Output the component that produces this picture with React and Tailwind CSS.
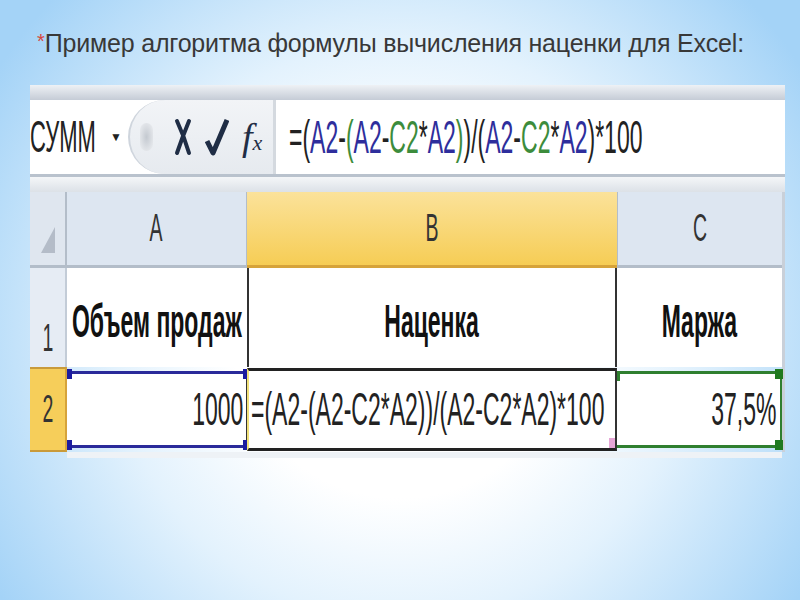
import React from 'react';

const sans = { fontFamily: '"Liberation Sans", Arial, sans-serif' };

// formula pieces with Excel's reference colours
const formula = [
  ['=(', 'text-[#222]'],
  ['A2', 'text-[#2e2e9c]'],
  ['-', 'text-[#222]'],
  ['(', 'text-[#3c8c3c]'],
  ['A2', 'text-[#2e2e9c]'],
  ['-', 'text-[#222]'],
  ['C2', 'text-[#3c8c3c]'],
  ['*', 'text-[#222]'],
  ['A2', 'text-[#2e2e9c]'],
  [')', 'text-[#3c8c3c]'],
  [')/(', 'text-[#222]'],
  ['A2', 'text-[#2e2e9c]'],
  ['-', 'text-[#222]'],
  ['C2', 'text-[#3c8c3c]'],
  ['*', 'text-[#222]'],
  ['A2', 'text-[#2e2e9c]'],
  [')*100', 'text-[#222]'],
];

// the screenshot is squeezed horizontally, so text is drawn narrow
const Narrow = ({ children, origin = 'origin-center', className = '' }) => (
  <span className={`inline-block shrink-0 whitespace-nowrap scale-x-[0.5] ${origin} ${className}`}>
    {children}
  </span>
);

const Handle = ({ className }) => (
  <span className={`absolute ${className}`}></span>
);

export default function App() {
  return (
    <div
      className="w-[800px] h-[600px] overflow-hidden bg-[radial-gradient(ellipse_60%_80%_at_50%_55%,#ffffff_35%,#e3f2fd_60%,#a4d3f7_100%)]"
      style={sans}
    >
      {/* Title */}
      <div className="pt-[31px] pl-[37px] flex items-start">
        <span className="text-[#d9463c] text-[20px] leading-none">*</span>
        <span className="text-[#383838] text-[25px] leading-none tracking-[-0.2px]">
          Пример алгоритма формулы вычисления наценки для Excel:
        </span>
      </div>

      {/* Excel screenshot */}
      <div className="ml-[30px] mt-[29px] w-[755px] flex flex-col">
        <div className="h-[15px] bg-[linear-gradient(#eef1f5,#c5ccd6)]"></div>

        {/* Formula bar */}
        <div className="h-[77px] flex bg-white border-b-[3px] border-[#b9c2cd]">
          <div className="w-[98px] relative flex items-center">
            <Narrow origin="origin-left" className="text-[44px] text-[#222]">СУММ</Narrow>
            <span className="absolute left-[80px] top-[28px] text-[12px] text-[#222]">▼</span>
          </div>
          <div className="w-[145px] flex items-center pl-[10px] bg-[linear-gradient(#f2f4f7,#e6eaef)] rounded-l-[40px] border-l-2 border-[#cfd5dd]">
            <span className="w-[13px] h-[28px] rounded-full bg-[radial-gradient(#c4c9d0,#eef0f3)]"></span>
            <svg width="18" height="38" viewBox="0 0 18 38" className="ml-[21px]">
              <path d="M3 3 Q10 18 15 35 M15 3 Q8 20 3 35" stroke="#1f2d45" strokeWidth="4" fill="none" strokeLinecap="round" />
            </svg>
            <svg width="24" height="40" viewBox="0 0 24 40" className="ml-[13px]">
              <path d="M2 24 L8 36 L22 3" stroke="#1f2d45" strokeWidth="5" fill="none" strokeLinejoin="round" />
            </svg>
            <span className="ml-[13px] text-[38px] italic text-[#1f2d45] leading-none" style={{ fontFamily: '"Liberation Serif", serif' }}>
              f<span className="text-[22px]">x</span>
            </span>
          </div>
          <div className="w-[3px] bg-[#d4d9df]"></div>
          <div className="flex-1 flex items-center pl-[13px] overflow-hidden">
            <Narrow origin="origin-left" className="text-[46px]">
              {formula.map(([t, c], i) => (
                <span key={i} className={c}>{t}</span>
              ))}
            </Narrow>
          </div>
        </div>

        <div className="h-[15px] bg-[linear-gradient(#f4f6f8,#dce1e7)]"></div>

        {/* Grid */}
        <div className="grid grid-cols-[37px_180px_370px_165px_3px] grid-rows-[76px_99px_85px]">
          {/* header row */}
          <div className="bg-[#dfe6ef] border-b-[3px] border-r-[2px] border-[#b3bdc9] flex items-end justify-center pb-[10px]">
            <svg width="18" height="30" viewBox="0 0 18 30"><polygon points="16,2 16,28 2,28" fill="#b4bcc8" /></svg>
          </div>
          <div className="bg-[#dde6f1] border-b-[3px] border-r border-[#b3bdc9] flex items-center justify-center overflow-hidden text-[39px] text-[#333]">
            <Narrow>A</Narrow>
          </div>
          <div className="bg-[linear-gradient(#fbe29a,#f6cd55)] border-b-[3px] border-[#d6a33a] flex items-center justify-center overflow-hidden text-[39px] text-[#333]">
            <Narrow>B</Narrow>
          </div>
          <div className="bg-[#dde6f1] border-b-[3px] border-l border-[#b3bdc9] flex items-center justify-center overflow-hidden text-[39px] text-[#333]">
            <Narrow>C</Narrow>
          </div>
          <div className="bg-[#c9d0d9]"></div>

          {/* row 1 */}
          <div className="bg-[#e6ecf4] border-r-[2px] border-[#c3ccd7] flex items-end justify-center overflow-hidden text-[39px] text-[#333]">
            <Narrow>1</Narrow>
          </div>
          <div className="bg-white flex items-center justify-center overflow-hidden text-[46px] font-bold text-[#111] pt-[8px]">
            <Narrow>Объем продаж</Narrow>
          </div>
          <div className="bg-white border-l-2 border-r-2 border-[#333] flex items-center justify-center overflow-hidden text-[46px] font-bold text-[#111] pt-[8px]">
            <Narrow>Наценка</Narrow>
          </div>
          <div className="bg-white flex items-center justify-center overflow-hidden text-[46px] font-bold text-[#111] pt-[8px]">
            <Narrow>Маржа</Narrow>
          </div>
          <div className="bg-[#c9d0d9]"></div>

          {/* row 2 */}
          <div className="bg-[#f6ce5a] border-r-[2px] border-[#d6a33a] border-y-2 border-y-[#c99a3a] flex items-center justify-center overflow-hidden text-[39px] text-[#333]">
            <Narrow>2</Narrow>
          </div>
          <div className="bg-white relative flex items-center justify-end pr-[3px] text-[46px] text-[#222] border-y-[3px] border-[#2a2a9a] border-r border-r-[#333] my-[4px]">
            <Narrow origin="origin-right">1000</Narrow>
            <Handle className="w-[5px] h-[10px] bg-[#1c1ca0] left-0 -top-[5px]" />
            <Handle className="w-[5px] h-[10px] bg-[#1c1ca0] left-0 -bottom-[5px]" />
            <Handle className="w-[4px] h-[10px] bg-[#1c1ca0] -right-[1px] -top-[5px]" />
            <Handle className="w-[4px] h-[10px] bg-[#1c1ca0] -right-[1px] -bottom-[5px]" />
          </div>
          <div className="bg-white relative flex items-center pl-[2px] text-[46px] text-[#222] border-y-[3px] border-[#222] border-l-2 border-l-[#f0e07a] border-r-2 border-r-[#333] my-[1px] overflow-hidden">
            <Narrow origin="origin-left">=(A2-(A2-C2*A2))/(A2-C2*A2)*100</Narrow>
            <Handle className="w-[6px] h-[10px] bg-[#e6a6d6] right-0 bottom-0" />
          </div>
          <div className="bg-white relative flex items-center justify-end pr-[4px] text-[46px] text-[#222] border-y-[3px] border-[#2f7f2f] border-r-2 my-[4px]">
            <Narrow origin="origin-right">37,5%</Narrow>
            <Handle className="w-[8px] h-[10px] bg-[#1f7a1f] -right-[3px] -top-[5px]" />
            <Handle className="w-[8px] h-[10px] bg-[#1f7a1f] -right-[3px] -bottom-[5px]" />
            <Handle className="w-[3px] h-[10px] bg-[#2f7f2f] left-0 -top-[3px]" />
          </div>
          <div className="bg-[#c9d0d9]"></div>
        </div>
        <div className="h-[6px] bg-[#eef2f6] ml-[37px] w-[715px]"></div>
      </div>
    </div>
  );
}
